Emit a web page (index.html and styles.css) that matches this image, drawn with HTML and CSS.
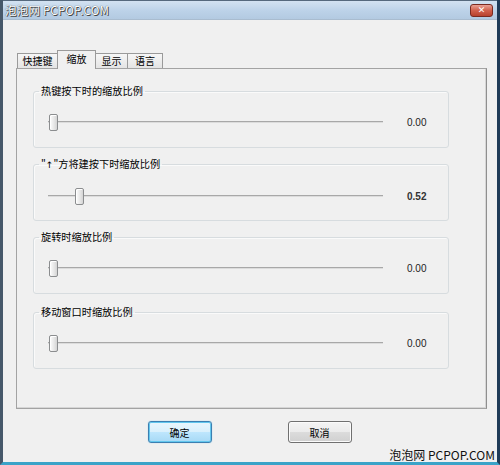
FILE: index.html
```html
<!DOCTYPE html>
<html lang="zh-CN">
<head>
<meta charset="utf-8">
<title>缩放设置</title>
<link rel="stylesheet" href="styles.css">
</head>
<body>
<div class="window">
  <div class="titlebar">
    <span class="title">泡泡网 PCPOP.COM</span>
    <span class="close">✕</span>
  </div>
  <div class="client">
    <div class="tabs">
      <div class="tab tab-keys">快捷键</div>
      <div class="tab tab-zoom active">缩放</div>
      <div class="tab tab-display">显示</div>
      <div class="tab tab-lang">语言</div>
    </div>
    <div class="panel">
      <fieldset class="group">
        <legend>热键按下时的缩放比例</legend>
        <div class="row">
          <div class="slider"><div class="track"></div><div class="thumb" style="left:1px"></div></div>
          <span class="value">0.00</span>
        </div>
      </fieldset>
      <fieldset class="group">
        <legend>"<span class="arrow">↑</span>"方将建按下时缩放比例</legend>
        <div class="row">
          <div class="slider"><div class="track"></div><div class="thumb" style="left:27px"></div></div>
          <span class="value strong">0.52</span>
        </div>
      </fieldset>
      <fieldset class="group">
        <legend>旋转时缩放比例</legend>
        <div class="row">
          <div class="slider"><div class="track"></div><div class="thumb" style="left:1px"></div></div>
          <span class="value">0.00</span>
        </div>
      </fieldset>
      <fieldset class="group">
        <legend>移动窗口时缩放比例</legend>
        <div class="row">
          <div class="slider"><div class="track"></div><div class="thumb" style="left:1px"></div></div>
          <span class="value">0.00</span>
        </div>
      </fieldset>
    </div>
    <div class="buttons">
      <button class="btn default">确定</button>
      <button class="btn">取消</button>
    </div>
  </div>
  <div class="watermark">泡泡网 PCPOP.COM</div>
</div>
</body>
</html>
```

FILE: styles.css
```css
html, body {
  margin: 0;
  padding: 0;
  background: #f0f0f0;
}

body {
  font-family: "Noto Sans CJK SC", "Noto Sans", sans-serif;
  color: #000;
}

/* dialog frame */
.window {
  position: relative;
  width: 500px;
  height: 465px;
  box-sizing: border-box;
  display: flex;
  flex-direction: column;
  background: #f0f0f0;
  border-left: 3px solid #46586a;
  border-right: 3px solid #1f3b57;
  border-bottom: 3px solid #3aa3c8;
  overflow: hidden;
}

.titlebar {
  display: flex;
  align-items: center;
  padding: 0 2px;
  height: 18px;
  border-top: 1px solid #56697d;
  border-bottom: 1px solid #a9bccf;
  background: linear-gradient(#d3e2f1, #bcd2e8 55%, #b3cae1);
}

.title {
  font-size: 11.5px;
  line-height: 14px;
  color: #fff;
  text-shadow: 0 0 1px #2a2a2a, 1px 1px 0 #4a4a4a;
  letter-spacing: 0.2px;
}

.close {
  margin-left: auto;
  margin-right: 2px;
  width: 23px;
  height: 13px;
  box-sizing: border-box;
  border: 1px solid #7a2a20;
  border-radius: 3px;
  background: linear-gradient(#e9a093, #d0604c 50%, #b8412d);
  color: #fff;
  font-family: "DejaVu Sans", sans-serif;
  font-size: 9px;
  font-weight: bold;
  line-height: 11px;
  text-align: center;
}

/* client area */
.client {
  flex: 1;
  display: flex;
  flex-direction: column;
  padding: 30px 0 0 13px;
}

.tabs {
  display: flex;
  align-items: flex-end;
  height: 19px;
  margin-left: 1px;
  margin-bottom: -1px;
  position: relative;
  z-index: 1;
}

.tab {
  height: 15px;
  margin-bottom: 1px;
  box-sizing: border-box;
  border: 1px solid #9a9a9a;
  border-bottom: none;
  border-left-width: 0;
  background: linear-gradient(#f6f6f6, #e4e4e4);
  font-size: 10px;
  line-height: 13px;
  text-align: center;
  color: #000;
}

.tab-keys { width: 41px; border-left-width: 1px; }
.tab-zoom { width: 39px; }
.tab-display { width: 33px; }
.tab-lang { width: 35px; }

.tab.active {
  height: 19px;
  margin-bottom: 0;
  border-left-width: 1px;
  margin-left: -1px;
  margin-right: -1px;
  background: #f0f0f0;
  line-height: 16px;
}

.tab.active + .tab {
  border-left-width: 1px;
}

.panel {
  width: 471px;
  height: 341px;
  box-sizing: border-box;
  border: 1px solid #a3a3a3;
  border-right-color: #8f8f8f;
  box-shadow: inset -1px -1px 0 #d6d6d6;
  background: #f0f0f0;
  padding: 15px 0 0 16px;
  display: flex;
  flex-direction: column;
  gap: 9px;
}

/* group boxes */
.group {
  width: 416px;
  height: 64px;
  box-sizing: border-box;
  margin: 0;
  padding: 0;
  border: 1px solid #d7dcdf;
  border-radius: 3px;
  box-shadow: inset 1px 1px 0 #fafafa;
}

.group:last-child {
  margin-top: 2px;
}

.group legend {
  margin-left: 5px;
  padding: 0 2px;
  font-size: 10.2px;
  line-height: 14px;
  color: #000;
}

.arrow {
  font-family: "DejaVu Sans", sans-serif;
  font-size: 9px;
}

.row {
  display: flex;
  align-items: center;
  height: 17px;
  margin-top: 16px;
  padding-left: 14px;
}

.slider {
  position: relative;
  width: 335px;
  height: 17px;
}

.track {
  margin-top: 7px;
  height: 2px;
  background: linear-gradient(#a8a8a8 50%, #dcdcdc 50%);
}

.thumb {
  position: absolute;
  top: 0;
  width: 9px;
  height: 17px;
  box-sizing: border-box;
  border: 1px solid #8b8d8f;
  border-radius: 2px;
  background: linear-gradient(90deg, #fdfdfd, #e6e6e6 60%, #d4d4d4);
  box-shadow: inset 1px 1px 0 #fff;
}

.value {
  margin-left: 24px;
  font-family: "Liberation Sans", sans-serif;
  font-size: 10px;
  color: #222;
}

.value.strong {
  font-weight: bold;
  color: #333;
}

/* dialog buttons */
.buttons {
  display: flex;
  justify-content: center;
  gap: 76px;
  margin-top: 12px;
  padding-right: 14px;
}

.btn {
  width: 64px;
  height: 22px;
  box-sizing: border-box;
  padding: 0;
  border: 1px solid #707070;
  border-radius: 3px;
  background: linear-gradient(#f4f4f4, #ebebeb 50%, #dcdcdc 50%, #d0d0d0);
  box-shadow: inset 0 0 0 1px #fbfbfb;
  font-family: "Noto Sans CJK SC", sans-serif;
  font-size: 10px;
  color: #000;
}

.btn.default {
  border-color: #3c7fb1;
  background: linear-gradient(#eaf6fd, #d9f0fc 50%, #bee6fd 50%, #a7d9f5);
  box-shadow: inset 0 0 0 1px #63c7ee, 0 0 1px #6fc3e8;
}

.watermark {
  position: absolute;
  right: 2px;
  bottom: 0;
  font-size: 12px;
  line-height: 14px;
  color: #111;
  background: #f0f0f0;
}
```
